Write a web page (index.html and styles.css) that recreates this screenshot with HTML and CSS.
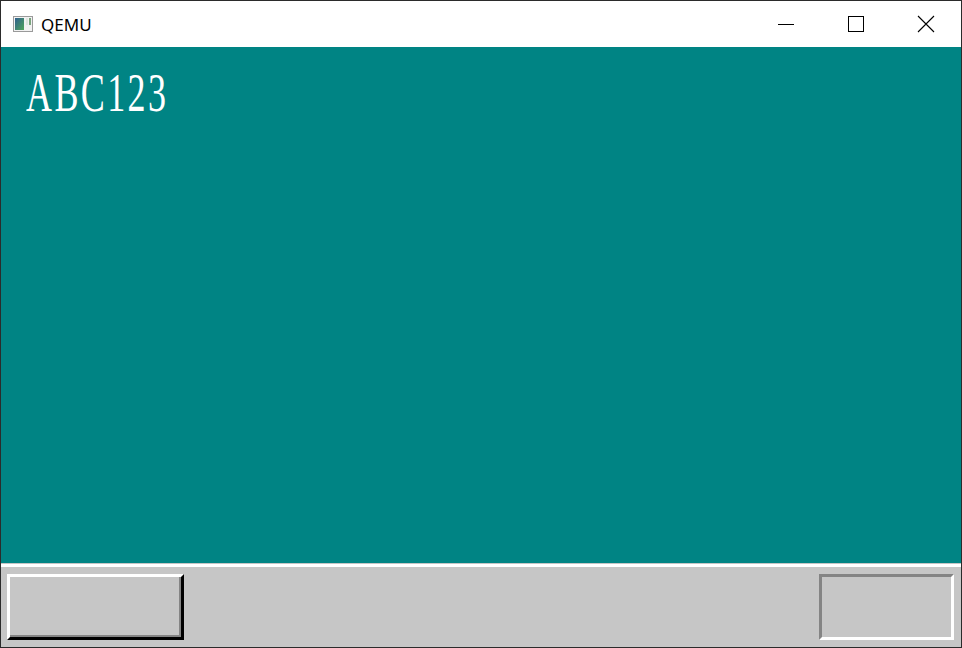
FILE: index.html
```html
<!DOCTYPE html>
<html>
<head>
<meta charset="utf-8">
<link rel="stylesheet" href="styles.css">
</head>
<body>
<div class="window">
  <div class="titlebar">
    <div class="app">
      <svg class="appicon" width="20" height="16" viewBox="0 0 20 16">
        <defs>
          <linearGradient id="g" x1="0" y1="0" x2="1" y2="1">
            <stop offset="0" stop-color="#2f5f8f"/>
            <stop offset="1" stop-color="#4fa65a"/>
          </linearGradient>
        </defs>
        <rect x="0.5" y="0.5" width="19" height="15" fill="#f2f2f2" stroke="#9a9a9a"/>
        <rect x="2" y="2" width="9" height="12" fill="url(#g)"/>
        <rect x="13" y="2" width="2" height="7" fill="#dfe6e0"/>
        <rect x="16" y="2" width="2" height="7" fill="#7aa57f"/>
      </svg>
      <span class="title">QEMU</span>
    </div>
    <div class="controls">
      <div class="ctl">
        <svg width="16" height="16" viewBox="0 0 16 16"><path d="M0 8.5h16" stroke="#000" stroke-width="1"/></svg>
      </div>
      <div class="ctl">
        <svg width="16" height="16" viewBox="0 0 16 16"><rect x="0.5" y="0.5" width="15" height="15" fill="none" stroke="#000"/></svg>
      </div>
      <div class="ctl">
        <svg width="18" height="18" viewBox="0 0 18 18"><path d="M1 1l16 16M17 1l-16 16" stroke="#000" stroke-width="1.1"/></svg>
      </div>
    </div>
  </div>
  <div class="screen">
    <div class="desktop">
      <div class="text">ABC123</div>
    </div>
    <div class="taskbar">
      <div class="btn raised"></div>
      <div class="btn sunken"></div>
    </div>
  </div>
</div>
</body>
</html>
```
FILE: styles.css
```css
html, body {
  margin: 0;
  padding: 0;
  width: 962px;
  height: 648px;
  overflow: hidden;
  background: #ffffff;
}
.window {
  box-sizing: border-box;
  width: 962px;
  height: 648px;
  border: 1px solid #2b2b2b;
  display: flex;
  flex-direction: column;
}
.titlebar {
  height: 46px;
  background: #ffffff;
  display: flex;
  align-items: center;
  justify-content: space-between;
  flex: none;
}
.app {
  display: flex;
  align-items: center;
  padding-left: 12px;
}
.appicon { display: block; }
.title {
  font-family: "Segoe UI", "Noto Sans", "Open Sans", sans-serif;
  font-size: 17px;
  color: #000;
  margin-left: 8px;
  letter-spacing: 0px;
}
.controls {
  display: flex;
  height: 46px;
}
.ctl {
  width: 70px;
  display: flex;
  align-items: center;
  justify-content: center;
}
.ctl svg { display: block; }
.screen {
  flex: 1;
  display: flex;
  flex-direction: column;
}
.desktop {
  height: 516px;
  background: #008484;
  padding: 26px 0 0 25px;
  box-sizing: border-box;
}
.text {
  font-family: "Liberation Serif", "Times New Roman", serif;
  font-size: 36px;
  line-height: 36px;
  color: #ffffff;
  letter-spacing: 2.4px;
  transform: scaleY(1.55);
  transform-origin: left top;
  display: inline-block;
  margin-top: -9px;
}
.taskbar {
  flex: 1;
  background: #c6c6c6;
  border-top: 1px solid #c6c6c6;
  position: relative;
  display: flex;
  justify-content: space-between;
  padding: 10px 7px 6px 6px;
  box-sizing: border-box;
}
.taskbar::before {
  content: "";
  position: absolute;
  left: 0;
  right: 0;
  top: 0;
  height: 3px;
  background: #ffffff;
}
.btn {
  box-sizing: border-box;
  height: 66px;
}
.raised {
  width: 177px;
  background: #c6c6c6;
  border-top: 3px solid #ffffff;
  border-left: 3px solid #ffffff;
  border-right: 3px solid #000000;
  border-bottom: 3px solid #000000;
  box-shadow: inset -2px -2px 0 #848484;
}
.sunken {
  width: 135px;
  background: #c6c6c6;
  border-top: 3px solid #848484;
  border-left: 3px solid #848484;
  border-right: 3px solid #ffffff;
  border-bottom: 3px solid #ffffff;
}
```
